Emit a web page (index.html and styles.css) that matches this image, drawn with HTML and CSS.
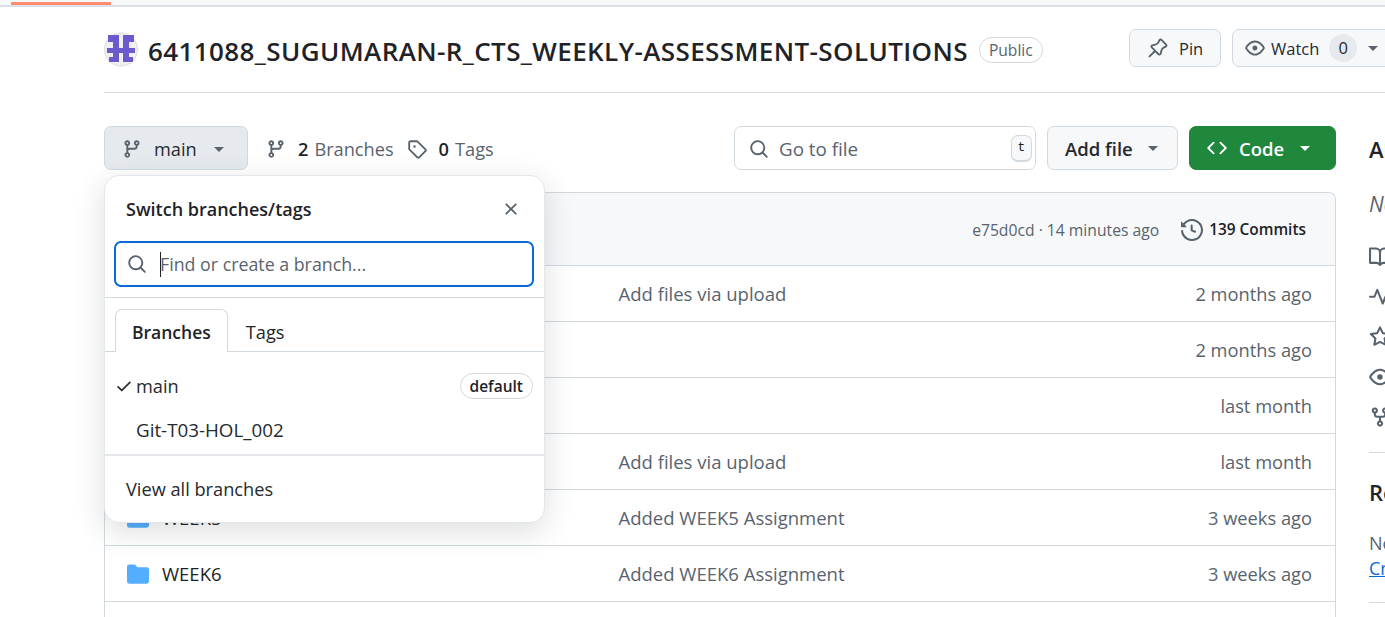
FILE: index.html
```html
<!DOCTYPE html>
<html lang="en">
<head>
<meta charset="UTF-8" />
<title>6411088_SUGUMARAN-R_CTS_WEEKLY-ASSESSMENT-SOLUTIONS</title>
<link rel="stylesheet" href="styles.css">
</head>
<body>

<div class="topbar"><div class="progress"></div></div>

<div class="repo-head">
  <div class="repo-title">
    <svg class="avatar" viewBox="0 0 34 35">
      <circle cx="17" cy="17.5" r="16.5" fill="#f0f0f0" stroke="#dcdcdc"/>
      <path fill="#6a5acd" d="M4 3h11v7H4zM19 3h11v7H19zM9 3h6v27H9zM19 3h6v27h-6zM3 16h28v5H3zM5 25h10v5H5zM19 25h10v5H19z"/>
    </svg>
    <strong class="repo-name">6411088_SUGUMARAN-R_CTS_WEEKLY-ASSESSMENT-SOLUTIONS</strong>
    <span class="label-public">Public</span>
  </div>
  <div class="repo-actions">
    <button class="btn btn-pin">
      <svg class="icon" viewBox="0 0 16 16"><path d="m11.294.984 3.722 3.722a1.75 1.75 0 0 1-.504 2.826l-1.327.613a3.089 3.089 0 0 0-1.707 2.084l-.584 2.454c-.317 1.332-1.972 1.8-2.94.832L5.75 11.311 1.78 15.28a.749.749 0 0 1-1.275-.326.749.749 0 0 1 .215-.734L4.69 10.25l-2.204-2.204c-.968-.968-.5-2.623.832-2.94l2.454-.584a3.08 3.08 0 0 0 2.084-1.707l.613-1.327a1.75 1.75 0 0 1 2.826-.504ZM6.283 9.723l2.732 2.731a.25.25 0 0 0 .42-.119l.584-2.454a4.586 4.586 0 0 1 2.537-3.098l1.328-.613a.25.25 0 0 0 .072-.404l-3.722-3.722a.25.25 0 0 0-.404.072l-.613 1.328a4.584 4.584 0 0 1-3.098 2.537l-2.454.584a.25.25 0 0 0-.119.42l2.731 2.732Z"/></svg>
      Pin
    </button>
    <button class="btn btn-watch">
      <svg class="icon" viewBox="0 0 16 16"><path d="M8 2c1.981 0 3.671.992 4.933 2.078 1.27 1.091 2.187 2.345 2.637 3.023a1.62 1.62 0 0 1 0 1.798c-.45.678-1.367 1.932-2.637 3.023C11.67 13.008 9.981 14 8 14c-1.981 0-3.671-.992-4.933-2.078C1.797 10.83.88 9.576.43 8.898a1.62 1.62 0 0 1 0-1.798c.45-.677 1.367-1.931 2.637-3.022C4.33 2.992 6.019 2 8 2ZM1.679 7.932a.12.12 0 0 0 0 .136c.411.622 1.241 1.75 2.366 2.717C5.176 11.758 6.527 12.5 8 12.5c1.473 0 2.825-.742 3.955-1.715 1.124-.967 1.954-2.096 2.366-2.717a.12.12 0 0 0 0-.136c-.412-.621-1.242-1.75-2.366-2.717C10.824 4.242 9.473 3.5 8 3.5c-1.473 0-2.825.742-3.955 1.715-1.124.967-1.954 2.096-2.366 2.717ZM8 10a2 2 0 1 1-.001-3.999A2 2 0 0 1 8 10Z"/></svg>
      Watch
      <span class="counter">0</span>
      <span class="caret"></span>
    </button>
  </div>
</div>

<div class="layout">
  <main class="main-col">
    <div class="toolbar">
      <button class="btn btn-branch">
        <svg class="icon" viewBox="0 0 16 16"><path d="M9.5 3.25a2.25 2.25 0 1 1 3 2.122V6A2.5 2.5 0 0 1 10 8.5H6a1 1 0 0 0-1 1v1.128a2.251 2.251 0 1 1-1.5 0V5.372a2.25 2.25 0 1 1 1.5 0v1.836A2.493 2.493 0 0 1 6 7h4a1 1 0 0 0 1-1v-.628A2.25 2.25 0 0 1 9.5 3.25Zm-6 0a.75.75 0 1 0 1.5 0 .75.75 0 0 0-1.5 0Zm8.25-.75a.75.75 0 1 0 0 1.5.75.75 0 0 0 0-1.5ZM4.25 12a.75.75 0 1 0 0 1.5.75.75 0 0 0 0-1.5Z"/></svg>
        <span class="branch-name">main</span>
        <span class="caret"></span>
      </button>
      <a class="ref-link ref-branches">
        <svg class="icon" viewBox="0 0 16 16"><path d="M9.5 3.25a2.25 2.25 0 1 1 3 2.122V6A2.5 2.5 0 0 1 10 8.5H6a1 1 0 0 0-1 1v1.128a2.251 2.251 0 1 1-1.5 0V5.372a2.25 2.25 0 1 1 1.5 0v1.836A2.493 2.493 0 0 1 6 7h4a1 1 0 0 0 1-1v-.628A2.25 2.25 0 0 1 9.5 3.25Zm-6 0a.75.75 0 1 0 1.5 0 .75.75 0 0 0-1.5 0Zm8.25-.75a.75.75 0 1 0 0 1.5.75.75 0 0 0 0-1.5ZM4.25 12a.75.75 0 1 0 0 1.5.75.75 0 0 0 0-1.5Z"/></svg>
        <b>2</b> Branches
      </a>
      <a class="ref-link ref-tags">
        <svg class="icon" viewBox="0 0 16 16"><path d="M1 7.775V2.75C1 1.784 1.784 1 2.75 1h5.025c.464 0 .91.184 1.238.513l6.25 6.25a1.75 1.75 0 0 1 0 2.474l-5.026 5.026a1.75 1.75 0 0 1-2.474 0l-6.25-6.25A1.752 1.752 0 0 1 1 7.775Zm1.5 0c0 .066.026.13.073.177l6.25 6.25a.25.25 0 0 0 .354 0l5.025-5.025a.25.25 0 0 0 0-.354l-6.25-6.25a.25.25 0 0 0-.177-.073H2.75a.25.25 0 0 0-.25.25ZM6 5a1 1 0 1 1 0 2 1 1 0 0 1 0-2Z"/></svg>
        <b>0</b> Tags
      </a>
      <div class="go-to-file">
        <svg class="icon" viewBox="0 0 16 16"><path d="M10.68 11.74a6 6 0 0 1-7.922-8.982 6 6 0 0 1 8.982 7.922l3.04 3.04a.749.749 0 0 1-.326 1.275.749.749 0 0 1-.734-.215ZM11.5 7a4.499 4.499 0 1 0-8.997 0A4.499 4.499 0 0 0 11.5 7Z"/></svg>
        <span class="placeholder">Go to file</span>
        <kbd class="hotkey">t</kbd>
      </div>
      <button class="btn btn-add">Add file <span class="caret"></span></button>
      <button class="btn btn-code">
        <svg class="icon" viewBox="0 0 16 16"><path d="m11.28 3.22 4.25 4.25a.75.75 0 0 1 0 1.06l-4.25 4.25a.749.749 0 0 1-1.275-.326.749.749 0 0 1 .215-.734L13.94 8l-3.72-3.72a.749.749 0 0 1 .326-1.275.749.749 0 0 1 .734.215Zm-6.56 0a.751.751 0 0 1 1.042.018.751.751 0 0 1 .018 1.042L2.06 8l3.72 3.72a.749.749 0 0 1-.326 1.275.749.749 0 0 1-.734-.215L.47 8.53a.75.75 0 0 1 0-1.06Z"/></svg>
        Code
        <span class="caret"></span>
      </button>
    </div>

    <div class="file-box">
      <div class="commit-bar">
        <span class="commit-meta">e75d0cd · 14 minutes ago</span>
        <span class="commit-count">
          <svg class="icon" viewBox="0 0 16 16"><path d="m.427 1.927 1.215 1.215a8.002 8.002 0 1 1-1.6 5.685.75.75 0 1 1 1.493-.154 6.5 6.5 0 1 0 1.18-4.458l1.358 1.358A.25.25 0 0 1 3.896 6H.25A.25.25 0 0 1 0 5.75V2.104a.25.25 0 0 1 .427-.177ZM7.75 4a.75.75 0 0 1 .75.75v2.992l2.028.812a.75.75 0 0 1-.557 1.392l-2.5-1A.751.751 0 0 1 7 8.25v-3.5A.75.75 0 0 1 7.75 4Z"/></svg>
          139 Commits
        </span>
      </div>
      <div class="file-row">
        <svg class="folder" viewBox="0 0 16 16"><path d="M1.75 1A1.75 1.75 0 0 0 0 2.75v10.5C0 14.216.784 15 1.75 15h12.5A1.75 1.75 0 0 0 16 13.25v-8.5A1.75 1.75 0 0 0 14.25 3H7.5a.25.25 0 0 1-.2-.1l-.9-1.2C6.07 1.26 5.55 1 5 1H1.75Z"/></svg>
        <span class="file-name">WEEK1</span>
        <span class="file-msg">Add files via upload</span>
        <span class="file-date">2 months ago</span>
      </div>
      <div class="file-row">
        <svg class="folder" viewBox="0 0 16 16"><path d="M1.75 1A1.75 1.75 0 0 0 0 2.75v10.5C0 14.216.784 15 1.75 15h12.5A1.75 1.75 0 0 0 16 13.25v-8.5A1.75 1.75 0 0 0 14.25 3H7.5a.25.25 0 0 1-.2-.1l-.9-1.2C6.07 1.26 5.55 1 5 1H1.75Z"/></svg>
        <span class="file-name">WEEK2</span>
        <span class="file-msg"></span>
        <span class="file-date">2 months ago</span>
      </div>
      <div class="file-row">
        <svg class="folder" viewBox="0 0 16 16"><path d="M1.75 1A1.75 1.75 0 0 0 0 2.75v10.5C0 14.216.784 15 1.75 15h12.5A1.75 1.75 0 0 0 16 13.25v-8.5A1.75 1.75 0 0 0 14.25 3H7.5a.25.25 0 0 1-.2-.1l-.9-1.2C6.07 1.26 5.55 1 5 1H1.75Z"/></svg>
        <span class="file-name">WEEK3</span>
        <span class="file-msg"></span>
        <span class="file-date">last month</span>
      </div>
      <div class="file-row">
        <svg class="folder" viewBox="0 0 16 16"><path d="M1.75 1A1.75 1.75 0 0 0 0 2.75v10.5C0 14.216.784 15 1.75 15h12.5A1.75 1.75 0 0 0 16 13.25v-8.5A1.75 1.75 0 0 0 14.25 3H7.5a.25.25 0 0 1-.2-.1l-.9-1.2C6.07 1.26 5.55 1 5 1H1.75Z"/></svg>
        <span class="file-name">WEEK4</span>
        <span class="file-msg">Add files via upload</span>
        <span class="file-date">last month</span>
      </div>
      <div class="file-row">
        <svg class="folder" viewBox="0 0 16 16"><path d="M1.75 1A1.75 1.75 0 0 0 0 2.75v10.5C0 14.216.784 15 1.75 15h12.5A1.75 1.75 0 0 0 16 13.25v-8.5A1.75 1.75 0 0 0 14.25 3H7.5a.25.25 0 0 1-.2-.1l-.9-1.2C6.07 1.26 5.55 1 5 1H1.75Z"/></svg>
        <span class="file-name">WEEK5</span>
        <span class="file-msg">Added WEEK5 Assignment</span>
        <span class="file-date">3 weeks ago</span>
      </div>
      <div class="file-row">
        <svg class="folder" viewBox="0 0 16 16"><path d="M1.75 1A1.75 1.75 0 0 0 0 2.75v10.5C0 14.216.784 15 1.75 15h12.5A1.75 1.75 0 0 0 16 13.25v-8.5A1.75 1.75 0 0 0 14.25 3H7.5a.25.25 0 0 1-.2-.1l-.9-1.2C6.07 1.26 5.55 1 5 1H1.75Z"/></svg>
        <span class="file-name">WEEK6</span>
        <span class="file-msg">Added WEEK6 Assignment</span>
        <span class="file-date">3 weeks ago</span>
      </div>
      <div class="file-row"></div>
    </div>

    <div class="branch-menu">
      <div class="menu-head">
        <span class="menu-title">Switch branches/tags</span>
        <svg class="icon menu-close" viewBox="0 0 16 16"><path d="M3.72 3.72a.75.75 0 0 1 1.06 0L8 6.94l3.22-3.22a.749.749 0 0 1 1.275.326.749.749 0 0 1-.215.734L9.06 8l3.22 3.22a.749.749 0 0 1-.326 1.275.749.749 0 0 1-.734-.215L8 9.06l-3.22 3.22a.751.751 0 0 1-1.042-.018.751.751 0 0 1-.018-1.042L6.94 8 3.72 4.78a.75.75 0 0 1 0-1.06Z"/></svg>
      </div>
      <div class="menu-search">
        <svg class="icon" viewBox="0 0 16 16"><path d="M10.68 11.74a6 6 0 0 1-7.922-8.982 6 6 0 0 1 8.982 7.922l3.04 3.04a.749.749 0 0 1-.326 1.275.749.749 0 0 1-.734-.215ZM11.5 7a4.499 4.499 0 1 0-8.997 0A4.499 4.499 0 0 0 11.5 7Z"/></svg>
        <span class="cursor"></span>
        <span class="placeholder">Find or create a branch...</span>
      </div>
      <div class="menu-tabs">
        <span class="menu-tab active">Branches</span>
        <span class="menu-tab">Tags</span>
      </div>
      <div class="menu-list">
        <div class="menu-item">
          <svg class="check" viewBox="0 0 16 16"><path d="M13.78 4.22a.75.75 0 0 1 0 1.06l-7.25 7.25a.75.75 0 0 1-1.06 0L2.22 9.28a.751.751 0 0 1 .018-1.042.751.751 0 0 1 1.042-.018L6 10.94l6.72-6.72a.75.75 0 0 1 1.06 0Z"/></svg>
          <span class="menu-branch">main</span>
          <span class="label-default">default</span>
        </div>
        <div class="menu-item">
          <span class="menu-branch no-check">Git-T03-HOL_002</span>
        </div>
      </div>
      <div class="menu-foot">View all branches</div>
    </div>
  </main>

  <aside class="sidebar">
    <h2 class="side-title">About</h2>
    <p class="side-desc">No description, website, or topics provided.</p>
    <ul class="side-links">
      <li><svg class="icon" viewBox="0 0 16 16"><path d="M0 1.75A.75.75 0 0 1 .75 1h4.253c1.227 0 2.317.59 3 1.501A3.743 3.743 0 0 1 11.006 1h4.245a.75.75 0 0 1 .75.75v10.5a.75.75 0 0 1-.75.75h-4.507a2.25 2.25 0 0 0-1.591.659l-.622.621a.75.75 0 0 1-1.06 0l-.622-.621A2.25 2.25 0 0 0 5.258 13H.75a.75.75 0 0 1-.75-.75Zm7.251 10.324.004-5.073-.002-2.253A2.25 2.25 0 0 0 5.003 2.5H1.5v9h3.757a3.75 3.75 0 0 1 1.994.574ZM8.755 4.75l-.004 7.322a3.752 3.752 0 0 1 1.992-.572H14.5v-9h-3.495a2.25 2.25 0 0 0-2.25 2.25Z"/></svg></li>
      <li><svg class="icon" viewBox="0 0 16 16"><path d="M6 2c.306 0 .582.187.696.471L10 10.731l1.304-3.26A.751.751 0 0 1 12 7h3.25a.75.75 0 0 1 0 1.5h-2.742l-1.812 4.528a.751.751 0 0 1-1.392 0L6 4.77 4.696 8.03A.75.75 0 0 1 4 8.5H.75a.75.75 0 0 1 0-1.5h2.742l1.812-4.529A.751.751 0 0 1 6 2Z"/></svg></li>
      <li><svg class="icon" viewBox="0 0 16 16"><path d="M8 .25a.75.75 0 0 1 .673.418l1.882 3.815 4.21.612a.75.75 0 0 1 .416 1.279l-3.046 2.97.719 4.192a.751.751 0 0 1-1.088.791L8 12.347l-3.766 1.98a.75.75 0 0 1-1.088-.79l.72-4.194L.818 6.374a.75.75 0 0 1 .416-1.28l4.21-.611L7.327.668A.75.75 0 0 1 8 .25Zm0 2.445L6.615 5.5a.75.75 0 0 1-.564.41l-3.097.45 2.24 2.184a.75.75 0 0 1 .216.664l-.528 3.084 2.769-1.456a.75.75 0 0 1 .698 0l2.77 1.456-.53-3.084a.75.75 0 0 1 .216-.664l2.24-2.183-3.096-.45a.75.75 0 0 1-.564-.41L8 2.694Z"/></svg></li>
      <li><svg class="icon" viewBox="0 0 16 16"><path d="M8 2c1.981 0 3.671.992 4.933 2.078 1.27 1.091 2.187 2.345 2.637 3.023a1.62 1.62 0 0 1 0 1.798c-.45.678-1.367 1.932-2.637 3.023C11.67 13.008 9.981 14 8 14c-1.981 0-3.671-.992-4.933-2.078C1.797 10.83.88 9.576.43 8.898a1.62 1.62 0 0 1 0-1.798c.45-.677 1.367-1.931 2.637-3.022C4.33 2.992 6.019 2 8 2ZM1.679 7.932a.12.12 0 0 0 0 .136c.411.622 1.241 1.75 2.366 2.717C5.176 11.758 6.527 12.5 8 12.5c1.473 0 2.825-.742 3.955-1.715 1.124-.967 1.954-2.096 2.366-2.717a.12.12 0 0 0 0-.136c-.412-.621-1.242-1.75-2.366-2.717C10.824 4.242 9.473 3.5 8 3.5c-1.473 0-2.825.742-3.955 1.715-1.124.967-1.954 2.096-2.366 2.717ZM8 10a2 2 0 1 1-.001-3.999A2 2 0 0 1 8 10Z"/></svg></li>
      <li><svg class="icon" viewBox="0 0 16 16"><path d="M5 5.372v.878c0 .414.336.75.75.75h4.5a.75.75 0 0 0 .75-.75v-.878a2.25 2.25 0 1 1 1.5 0v.878a2.25 2.25 0 0 1-2.25 2.25h-1.5v2.128a2.251 2.251 0 1 1-1.5 0V8.5h-1.5A2.25 2.25 0 0 1 3.5 6.25v-.878a2.25 2.25 0 1 1 1.5 0ZM5 3.25a.75.75 0 1 0-1.5 0 .75.75 0 0 0 1.5 0Zm6.75.75a.75.75 0 1 0 0-1.5.75.75 0 0 0 0 1.5Zm-3 8.75a.75.75 0 1 0-1.5 0 .75.75 0 0 0 1.5 0Z"/></svg></li>
    </ul>
    <div class="side-section">
      <h2 class="side-title">Releases</h2>
      <p class="side-note">No releases published</p>
      <a class="side-link">Create a new release</a>
    </div>
    <div class="side-rule"></div>
  </aside>
</div>

</body>
</html>
```

FILE: styles.css
```css
* {
  box-sizing: border-box;
}
html, body {
  height: 617px;
  overflow: hidden;
}
body {
  margin: 0;
  width: 1385px;
  font-family: "Open Sans", "Noto Sans", sans-serif;
  font-size: 18.2px;
  color: #1f2328;
  background: #fff;
}
.icon {
  width: 20px;
  height: 20px;
  fill: #59636e;
  flex-shrink: 0;
}
.caret {
  width: 0;
  height: 0;
  border-left: 5.5px solid transparent;
  border-right: 5.5px solid transparent;
  border-top: 5.5px solid #59636e;
  flex-shrink: 0;
}

/* top strip */
.topbar {
  height: 7px;
  padding: 2px 0 0 11px;
  background: #f6f8fa;
  border-bottom: 2px solid #d9e0e8;
}
.progress {
  width: 100px;
  height: 3px;
  background: #fd8c73;
}

/* repo head */
.repo-head {
  display: flex;
  justify-content: space-between;
  height: 86px;
  margin-left: 104px;
  padding-top: 22px;
  border-bottom: 1px solid #d1d9e0;
}
.repo-title {
  display: flex;
  align-items: flex-start;
}
.avatar {
  width: 34px;
  height: 35px;
  margin-top: 3px;
  margin-right: 10px;
}
.repo-name {
  font-size: 26px;
  font-weight: 600;
  line-height: 44px;
  letter-spacing: 0.4px;
}
.label-public {
  margin-left: 11px;
  margin-top: 8px;
  padding: 0 9px;
  height: 26px;
  line-height: 24px;
  font-size: 15.6px;
  font-weight: 500;
  color: #59636e;
  border: 1px solid #d1d9e0;
  border-radius: 13px;
}
.repo-actions {
  display: flex;
  align-items: flex-start;
  gap: 11px;
  width: 256px;
  flex-shrink: 0;
}
.btn {
  display: flex;
  align-items: center;
  flex-shrink: 0;
  font-family: inherit;
  font-size: 18.2px;
  font-weight: 500;
  color: #25292e;
  background: #f6f8fa;
  border: 1px solid #d1d9e0;
  border-radius: 7px;
  padding: 0;
}
.btn-pin {
  width: 92px;
  height: 38px;
  padding-left: 18px;
  gap: 11px;
  font-size: 16.5px;
}
.btn-watch {
  width: 178px;
  height: 38px;
  padding-left: 12px;
  gap: 6px;
  font-size: 16.5px;
}
.counter {
  width: 28px;
  height: 28px;
  margin-left: 4px;
  margin-right: 5px;
  line-height: 28px;
  text-align: center;
  background: #e6eaef;
  border-radius: 14px;
}

/* main layout */
.layout {
  display: flex;
  gap: 33px;
  padding-left: 104px;
  padding-top: 33px;
}
.main-col {
  position: relative;
  width: 1232px;
  flex-shrink: 0;
}
.toolbar {
  display: flex;
  align-items: center;
  height: 44px;
}
.btn-branch {
  width: 144px;
  height: 44px;
  padding: 2px 0 0 17px;
  background: #e6eaef;
}
.branch-name {
  margin-left: 12px;
  margin-right: 17px;
}
.ref-link {
  display: flex;
  align-items: center;
  gap: 12px;
  padding-top: 2px;
  color: #59636e;
  font-weight: 500;
}
.ref-link b {
  color: #1f2328;
  font-weight: 600;
  margin-right: -6px;
}
.ref-branches {
  margin-left: 18px;
}
.ref-tags {
  margin-left: 13px;
}
.go-to-file {
  display: flex;
  align-items: center;
  gap: 10px;
  width: 302px;
  height: 44px;
  margin-left: auto;
  padding: 2px 3px 0 14px;
  border: 1px solid #d1d9e0;
  border-radius: 7px;
}
.placeholder {
  color: #59636e;
  font-size: 18.8px;
}
.hotkey {
  margin-left: auto;
  margin-top: -2px;
  width: 21px;
  height: 27px;
  line-height: 24px;
  text-align: center;
  font-family: "Liberation Mono", monospace;
  font-size: 13px;
  background: #f6f8fa;
  border: 1px solid #d1d9e0;
  border-bottom-width: 2px;
  border-radius: 7px;
}
.btn-add {
  width: 131px;
  height: 44px;
  margin-left: 11px;
  padding: 1px 0 0 17px;
  gap: 15px;
  font-size: 18.5px;
  font-weight: 600;
}
.btn-code {
  width: 147px;
  height: 44px;
  margin-left: 11px;
  padding: 1px 0 0 17px;
  gap: 12px;
  font-size: 18.5px;
  font-weight: 600;
  color: #fff;
  background: #1f883d;
  border-color: #1f883d;
}
.btn-code .icon {
  fill: #fff;
  margin-top: -1px;
}
.btn-code .caret {
  border-top-color: #fff;
  margin-left: 4px;
}

/* file table */
.file-box {
  margin-top: 22px;
  border: 1px solid #d1d9e0;
  border-bottom: none;
  border-radius: 7px 7px 0 0;
}
.commit-bar {
  display: flex;
  justify-content: flex-end;
  align-items: center;
  gap: 22px;
  height: 72px;
  padding: 1px 29px 0 0;
  background: #f6f8fa;
  border-radius: 7px 7px 0 0;
}
.commit-meta {
  font-size: 15.7px;
  color: #59636e;
}
.commit-count {
  display: flex;
  align-items: center;
  gap: 6px;
  font-size: 15.4px;
  font-weight: 600;
}
.commit-count .icon {
  width: 22px;
  height: 22px;
}
.file-row {
  display: flex;
  align-items: center;
  height: 56px;
  padding: 0 23px 0 22px;
  border-top: 1px solid #d1d9e0;
  font-size: 18.5px;
}
.folder {
  width: 22px;
  height: 22px;
  fill: #54aeff;
  flex-shrink: 0;
}
.file-name {
  width: 456.5px;
  margin-left: 13px;
}
.file-msg {
  flex: 1;
  color: #59636e;
}
.file-date {
  font-size: 18.3px;
  color: #59636e;
}

/* branch popover */
.branch-menu {
  position: absolute;
  top: 49px;
  left: 0;
  width: 441px;
  height: 348px;
  background: #fff;
  border: 1px solid #e3e7ec;
  border-radius: 15px;
  box-shadow: 0 8px 30px rgba(37, 41, 46, 0.16);
  overflow: hidden;
}
.menu-head {
  display: flex;
  justify-content: space-between;
  align-items: center;
  height: 65px;
  padding: 0 23px 0 21px;
}
.menu-title {
  font-size: 18px;
  font-weight: 600;
}
.menu-close {
  width: 20px;
  height: 20px;
}
.menu-search {
  display: flex;
  align-items: center;
  gap: 13px;
  height: 46px;
  margin: 0 10px 0 9px;
  padding-left: 11px;
  border: 2px solid #0969da;
  border-radius: 7px;
}
.menu-search .placeholder {
  font-size: 17.8px;
}
.cursor {
  width: 1px;
  height: 25px;
  margin-right: -14px;
  background: #1f2328;
}
.menu-tabs {
  display: flex;
  height: 55px;
  margin-top: 10px;
  padding: 11px 0 0 10px;
  border-top: 1px solid #d1d9e0;
  border-bottom: 1px solid #d1d9e0;
}
.menu-tab {
  padding: 0 18px;
  height: 43px;
  line-height: 46px;
  font-weight: 500;
}
.menu-tab.active {
  font-size: 17.5px;
  font-weight: 600;
  line-height: 44px;
  background: #fff;
  border: 1px solid #d1d9e0;
  border-bottom: none;
  border-radius: 7px 7px 0 0;
  padding: 0 16px;
}
.menu-list {
  padding: 12px 11px 2px 10px;
}
.menu-item {
  display: flex;
  align-items: center;
  height: 44px;
}
.check {
  width: 18px;
  height: 18px;
  fill: #25292e;
}
.menu-branch {
  margin-left: 3px;
  color: #25292e;
}
.menu-branch.no-check {
  margin-left: 21px;
  font-size: 18.8px;
}
.label-default {
  margin-left: auto;
  height: 26px;
  padding: 0 9px;
  line-height: 24px;
  font-size: 15.5px;
  font-weight: 600;
  border: 1px solid #d1d9e0;
  border-radius: 14px;
}
.menu-foot {
  height: 67px;
  padding-left: 21px;
  line-height: 66px;
  color: #25292e;
  border-top: 2px solid #e3e7ec;
}

/* sidebar, cut by the window edge */
.sidebar {
  width: 300px;
  flex-shrink: 0;
}
.side-title {
  margin: 0;
  font-size: 22px;
  font-weight: 600;
  line-height: 44px;
}
.sidebar > .side-title {
  margin-top: 1px;
}
.side-desc {
  margin: 21px 0 0;
  font-size: 21px;
  font-style: italic;
  color: #59636e;
  line-height: 24px;
  white-space: nowrap;
}
.side-links {
  margin: 21px 0 0;
  padding: 0;
  list-style: none;
}
.side-links li {
  height: 40px;
  padding-top: 9px;
}
.side-links .icon {
  width: 22px;
  height: 22px;
}
.side-section {
  margin-top: 15px;
  padding-top: 17px;
  border-top: 1px solid #d1d9e0;
}
.side-note {
  margin: 18px 0 0;
  font-size: 18px;
  line-height: 22px;
  color: #59636e;
  white-space: nowrap;
}
.side-link {
  display: block;
  margin-top: 3px;
  font-size: 18px;
  line-height: 22px;
  color: #0969da;
  text-decoration: underline;
  white-space: nowrap;
}
.side-rule {
  margin-top: 23px;
  border-top: 1px solid #d1d9e0;
}
```
